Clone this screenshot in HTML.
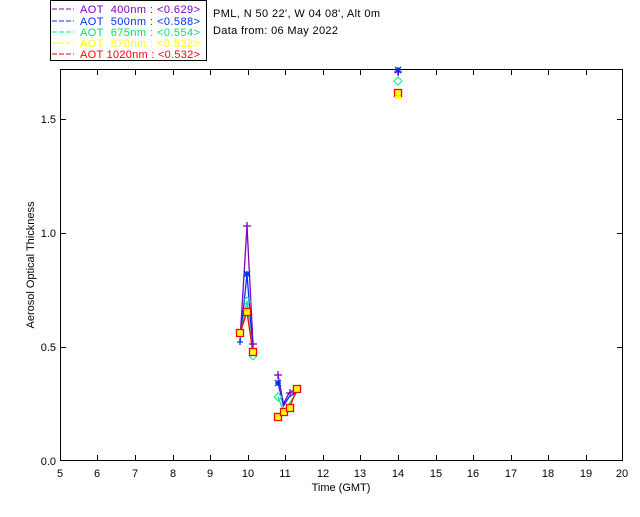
<!DOCTYPE html>
<html><head><style>
body{margin:0;background:#fff;width:640px;height:512px;overflow:hidden}
text{font-family:"Liberation Sans",sans-serif;font-size:11px}
</style></head><body>
<svg width="640" height="512" xmlns="http://www.w3.org/2000/svg">
<rect x="50.5" y="0.5" width="156" height="60" fill="#fff" stroke="#000"/>
<g font-size="11">
<line x1="52" y1="9" x2="74" y2="9" stroke="#7f00bf" stroke-dasharray="5,2"/>
<text x="80" y="13" fill="#7f00bf" textLength="120" lengthAdjust="spacing" xml:space="preserve">AOT  400nm : &lt;0.629&gt;</text>
<line x1="52" y1="21" x2="74" y2="21" stroke="#0030ff" stroke-dasharray="5,2"/>
<text x="80" y="25" fill="#0030ff" textLength="120" lengthAdjust="spacing" xml:space="preserve">AOT  500nm : &lt;0.588&gt;</text>
<line x1="52" y1="32" x2="74" y2="32" stroke="#00ee80" stroke-dasharray="5,2"/>
<text x="80" y="36" fill="#00e070" textLength="120" lengthAdjust="spacing" xml:space="preserve">AOT  675nm : &lt;0.554&gt;</text>
<line x1="52" y1="43" x2="74" y2="43" stroke="#ffff00" stroke-dasharray="5,2"/>
<text x="80" y="47" fill="#ffff00" textLength="120" lengthAdjust="spacing" xml:space="preserve">AOT  870nm : &lt;0.532&gt;</text>
<line x1="52" y1="54" x2="74" y2="54" stroke="#ff0000" stroke-dasharray="5,2"/>
<text x="80" y="58" fill="#ff0000" textLength="120" lengthAdjust="spacing" xml:space="preserve">AOT 1020nm : &lt;0.532&gt;</text>
</g>
<text x="213" y="17" textLength="167" lengthAdjust="spacing">PML, N 50 22', W 04 08', Alt 0m</text>
<text x="213" y="34" textLength="125" lengthAdjust="spacing">Data from: 06 May 2022</text>
<rect x="60.5" y="69.5" width="562" height="391" fill="none" stroke="#000"/>
<g stroke="#000">
<path d="M97.5 461v-6M135.5 461v-6M173.5 461v-6M210.5 461v-6M248.5 461v-6M285.5 461v-6M323.5 461v-6M360.5 461v-6M398.5 461v-6M436.5 461v-6M473.5 461v-6M511.5 461v-6M548.5 461v-6M586.5 461v-6"/>
<path d="M97.5 69v6M135.5 69v6M173.5 69v6M210.5 69v6M248.5 69v6M285.5 69v6M323.5 69v6M360.5 69v6M398.5 69v6M436.5 69v6M473.5 69v6M511.5 69v6M548.5 69v6M586.5 69v6"/>
<path d="M60 347.5h6M60 233.5h6M60 119.5h6M623 347.5h-6M623 233.5h-6M623 119.5h-6"/>
</g>
<g text-anchor="middle" font-size="11">
<text x="60" y="477">5</text><text x="97" y="477">6</text><text x="135" y="477">7</text><text x="173" y="477">8</text><text x="210" y="477">9</text><text x="248" y="477">10</text><text x="285" y="477">11</text><text x="323" y="477">12</text><text x="360" y="477">13</text><text x="398" y="477">14</text><text x="436" y="477">15</text><text x="473" y="477">16</text><text x="511" y="477">17</text><text x="548" y="477">18</text><text x="586" y="477">19</text><text x="622" y="477">20</text>
<text x="341" y="491">Time (GMT)</text>
</g>
<g text-anchor="end" font-size="11">
<text x="56" y="465">0.0</text><text x="56" y="351">0.5</text><text x="56" y="237">1.0</text><text x="56" y="123">1.5</text>
</g>
<text transform="translate(34,265) rotate(-90)" text-anchor="middle" font-size="10">Aerosol Optical Thickness</text>
<g fill="none" stroke-width="1.3">
<polyline stroke="#7f00bf" points="240,340 247,226 253,344"/>
<polyline stroke="#7f00bf" points="278,375 283.5,404 289,393 297,388"/>
<polyline stroke="#0030ff" points="240,342 247,274 253,352"/>
<polyline stroke="#0030ff" points="278,383 283.5,406 289,397 297,392"/>
<polyline stroke="#00ee80" points="240,338 247,301 253,356"/>
<polyline stroke="#00ee80" points="278,397 283.5,411 289,404 297,392"/>
<polyline stroke="#ffff00" points="240,336 247,310 253,354"/>
<polyline stroke="#ff0000" points="240,333 247,312 253,353"/>
<polyline stroke="#ff0000" points="278,417 283.5,413 289,409 297,389"/>
</g>
<g stroke="#7f00bf" stroke-width="1.3">
<path d="M243 226h8M247 222v8M249 344h8M253 340v8M274 375h8M278 371v8M286 393h8M290 389v8M394 72h8M398 68v8"/>
</g>
<g stroke="#0030ff" stroke-width="1.3">
<path d="M244 274l6 0M247 271v6M244 271l6 6M250 271l-6 6M237 342h6M240 339v6M275 383h6M278 380v6M275 380l6 6M281 380l-6 6M395 70h6M398 67v6M395 67l6 6M401 67l-6 6"/>
</g>
<g fill="none" stroke="#00ee80">
<path d="M247 297l4 4-4 4-4-4zM398 77l4 4-4 4-4-4zM278 393l4 4-4 4-4-4zM253 352l4 4-4 4-4-4z"/>
</g>
<g fill="#ffff00" stroke="#ff0000" stroke-width="1.3">
<rect x="236.5" y="329.5" width="7" height="7"/>
<rect x="243.5" y="308.5" width="7" height="7"/>
<rect x="249.5" y="348.5" width="7" height="7"/>
<rect x="274.5" y="413.5" width="7" height="7"/>
<rect x="280.5" y="408.5" width="7" height="7"/>
<rect x="286.5" y="404.5" width="7" height="7"/>
<rect x="293.5" y="385.5" width="7" height="7"/>
<rect x="394.5" y="89.5" width="7" height="7"/>
</g>
<rect x="395" y="96" width="6" height="3" fill="#ffff00"/>
</svg>
</body></html>
